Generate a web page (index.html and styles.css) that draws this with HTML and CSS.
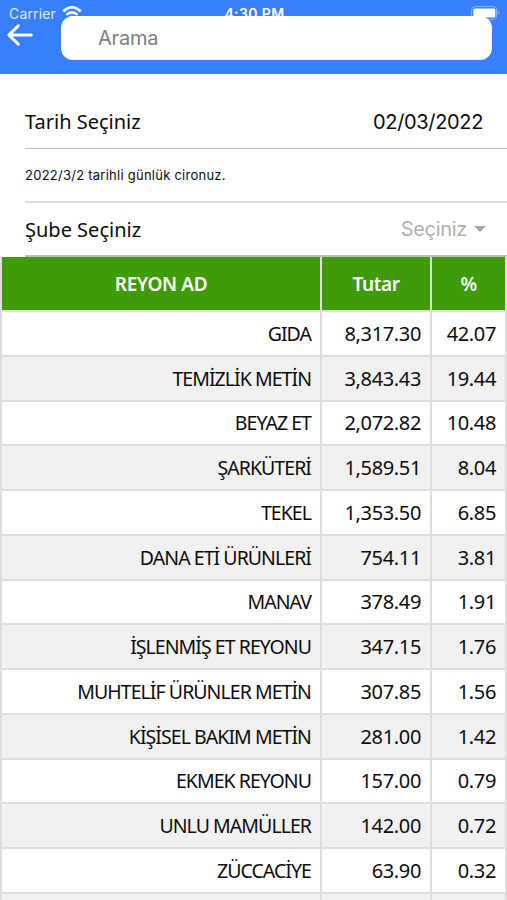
FILE: index.html
```html
<!DOCTYPE html>
<html lang="tr">
  <head>
    <meta charset="UTF-8" />
    <meta name="viewport" content="width=device-width, initial-scale=1.0" />
    <title>Reyon Ciro</title>
    <link rel="stylesheet" href="styles.css">
  </head>
  <body>
    <header class="header">
      <div class="status">
        <div class="carrier">
          <span class="carrierName">Carrier</span>
          <svg class="wifi" width="20" height="15" viewBox="0 0 20 15" fill="none" stroke="#fff" stroke-width="2.6">
            <path d="M1.2 5.2Q10 -2.8 18.8 5.2" />
            <path d="M4.4 8.8Q10 3.8 15.6 8.8" />
            <path d="M7 11L10 14L13 11Q10 8.6 7 11Z" fill="#fff" stroke="none" />
          </svg>
        </div>
        <span class="time">4:30 PM</span>
        <svg class="battery" width="29" height="14" viewBox="0 0 29 14">
          <rect x="0.6" y="0.6" width="25" height="12.8" rx="3.5" fill="none" stroke="#8db5ff" stroke-width="1" />
          <rect x="2.3" y="2.4" width="22" height="9.2" rx="1.5" fill="#fff" />
          <path d="M26.6 4.6Q29 7 26.6 9.4Z" fill="#8db5ff" />
        </svg>
      </div>
      <div class="searchRow">
        <svg class="back" width="28" height="24" viewBox="0 0 28 24" fill="none" stroke="#fff" stroke-width="3" stroke-linecap="round" stroke-linejoin="round">
          <path d="M25.3 12H3M12.3 2.8L2.8 12L12.3 21.2" />
        </svg>
        <input class="search" type="text" placeholder="Arama">
      </div>
    </header>

    <main>
      <div class="filters">
        <div class="item dateItem">
          <span class="label">Tarih Seçiniz</span>
          <span class="date">02/03/2022</span>
        </div>
        <div class="item noteItem">2022/3/2 tarihli günlük cironuz.</div>
        <div class="item branchItem">
          <span class="label">Şube Seçiniz</span>
          <span class="select">Seçiniz<span class="caret"></span></span>
        </div>
      </div>

      <div class="table">
        <div class="row head"><span>REYON AD</span><span>Tutar</span><span>%</span></div>
        <div class="row"><span>GIDA</span><span>8,317.30</span><span>42.07</span></div>
        <div class="row"><span>TEMİZLİK METİN</span><span>3,843.43</span><span>19.44</span></div>
        <div class="row"><span>BEYAZ ET</span><span>2,072.82</span><span>10.48</span></div>
        <div class="row"><span>ŞARKÜTERİ</span><span>1,589.51</span><span>8.04</span></div>
        <div class="row"><span>TEKEL</span><span>1,353.50</span><span>6.85</span></div>
        <div class="row"><span>DANA ETİ ÜRÜNLERİ</span><span>754.11</span><span>3.81</span></div>
        <div class="row"><span>MANAV</span><span>378.49</span><span>1.91</span></div>
        <div class="row"><span>İŞLENMİŞ ET REYONU</span><span>347.15</span><span>1.76</span></div>
        <div class="row"><span>MUHTELİF ÜRÜNLER METİN</span><span>307.85</span><span>1.56</span></div>
        <div class="row"><span>KİŞİSEL BAKIM METİN</span><span>281.00</span><span>1.42</span></div>
        <div class="row"><span>EKMEK REYONU</span><span>157.00</span><span>0.79</span></div>
        <div class="row"><span>UNLU MAMÜLLER</span><span>142.00</span><span>0.72</span></div>
        <div class="row"><span>ZÜCCACİYE</span><span>63.90</span><span>0.32</span></div>
        <div class="row"><span></span><span></span><span></span></div>
      </div>
    </main>
  </body>
</html>
```
FILE: styles.css
```css
* {
  margin: 0;
  padding: 0;
  box-sizing: border-box;
}

body {
  height: 900px;
  overflow: hidden;
  background-color: #fff;
  color: #0c0c0c;
  font-family: "Trebuchet MS", "Noto Sans", sans-serif;
}

.header {
  height: 74px;
  background-color: #387ffe;
  font-family: Inter, sans-serif;
}

.status {
  height: 26px;
  padding: 0 7px 0 9px;
  display: grid;
  grid-template-columns: 1fr auto 1fr;
  align-items: center;
  color: #fff;
}

.carrier {
  display: flex;
  align-items: center;
  gap: 6px;
}

.carrierName {
  font-size: 14px;
  letter-spacing: 0.15px;
  color: #dfeaff;
}

.time {
  font-size: 14px;
  font-weight: 600;
  letter-spacing: 0.4px;
}

.battery {
  justify-self: end;
}

.searchRow {
  position: relative;
  margin-top: -10.5px;
  padding: 0 15px 0 6px;
  display: flex;
  align-items: center;
}

.back {
  margin-top: -6px;
}

.search {
  flex: 1;
  height: 44px;
  margin-left: 27px;
  padding: 0 37px;
  border: none;
  border-radius: 12px;
  background-color: #fff;
  font-family: Inter, sans-serif;
  font-size: 20px;
  letter-spacing: -0.2px;
}

.search::placeholder {
  color: #808080;
}

.filters {
  padding: 21px 0 0 25px;
}

.item {
  display: flex;
  align-items: center;
  justify-content: space-between;
  border-bottom: 1px solid #b9b9b9;
}

.dateItem {
  height: 54px;
  padding-right: 24px;
}

.noteItem {
  height: 54px;
  border-bottom: 2px solid #dcdcdc;
  font-family: Inter, sans-serif;
  font-size: 13px;
  letter-spacing: 0.25px;
}

.branchItem {
  height: 54px;
  padding-right: 21px;
  border-bottom: 2px solid #bdbdbd;
}

.label {
  font-size: 20px;
}

.date {
  font-family: Inter, sans-serif;
  font-size: 20px;
  letter-spacing: -0.35px;
}

.select {
  display: flex;
  align-items: center;
  gap: 7px;
  font-family: Inter, sans-serif;
  font-size: 20px;
  letter-spacing: -0.3px;
  color: #b0b0b0;
}

.caret {
  border: 6px solid transparent;
  border-top-color: #a5a5a5;
  border-bottom: none;
}

.row {
  height: 44.75px;
  display: grid;
  grid-template-columns: 322px 110px 75px;
  font-size: 20px;
  letter-spacing: -0.35px;
  background-color: #fff;
}

.row:nth-child(odd) {
  background-color: #f1f1f1;
}

.row span {
  padding-right: 9px;
  display: flex;
  align-items: center;
  justify-content: flex-end;
  border-right: 2px solid #dedede;
  border-bottom: 2px solid #dedede;
  white-space: nowrap;
}

.row span:first-child {
  border-left: 2px solid #dedede;
  font-size: 19.5px;
  letter-spacing: -0.95px;
}

.row.head {
  height: 55px;
  background-color: #3f9b08;
  color: #fff;
  font-weight: 600;
}

.row.head span {
  padding-right: 0;
  justify-content: center;
  font-size: 19px;
  letter-spacing: -0.4px;
}
```
